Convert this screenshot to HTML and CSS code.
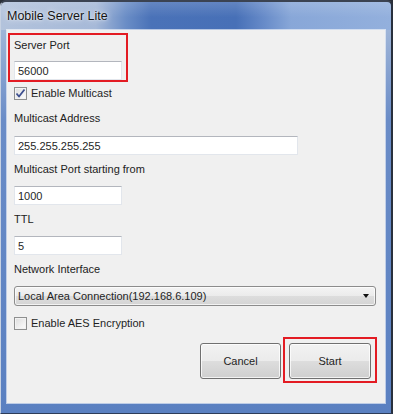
FILE: index.html
```html
<!DOCTYPE html>
<html lang="en">

<head>
    <meta charset="UTF-8">
    <meta name="viewport" content="width=device-width, initial-scale=1.0">
    <title>Mobile Server Lite</title>
    <link rel="stylesheet" href="styles.css">
</head>

<body>
    <div class="window">
        <div class="titlebar">
            <span class="title">Mobile Server Lite</span>
        </div>

        <div class="frame">
            <div class="client">
                <!-- Server port (highlighted) -->
                <div class="highlight port-box">
                    <span class="label">Server Port</span>
                    <input class="field field-short" type="text" value="56000">
                </div>

                <div class="form">
                    <label class="check-row multicast-row">
                        <span class="check">
                            <svg width="11" height="11" viewBox="0 0 11 11">
                                <path d="M1.5 5.5 L4 8.5 L9.5 1.5" fill="none" stroke="#3d4f8f" stroke-width="1.8" stroke-linejoin="round" />
                            </svg>
                        </span>
                        <span>Enable Multicast</span>
                    </label>

                    <span class="label address-label">Multicast Address</span>
                    <input class="field field-long address-field" type="text" value="255.255.255.255">

                    <span class="label gap-label">Multicast Port starting from</span>
                    <input class="field field-short gap-field" type="text" value="1000">

                    <span class="label gap-label">TTL</span>
                    <input class="field field-short gap-field" type="text" value="5">

                    <span class="label gap-label">Network Interface</span>
                    <div class="combo">
                        <span>Local Area Connection(192.168.6.109)</span>
                        <span class="arrow"></span>
                    </div>

                    <label class="check-row aes-row">
                        <span class="check"></span>
                        <span>Enable AES Encryption</span>
                    </label>
                </div>

                <div class="buttons">
                    <button class="btn btn-cancel">Cancel</button>
                    <div class="highlight start-box">
                        <button class="btn">Start</button>
                    </div>
                </div>
            </div>
        </div>
    </div>
</body>

</html>
```

FILE: styles.css
```css
* {
    margin: 0;
    padding: 0;
    box-sizing: border-box;
}

body {
    width: 393px;
    height: 414px;
    overflow: hidden;
    background: #2a2f38;
    font-family: "Liberation Sans", Arial, sans-serif;
    font-size: 11px;
    color: #1f1f1f;
}

.window {
    width: 393px;
    height: 414px;
    display: flex;
    flex-direction: column;
    border-top: 2px solid #3b4352;
    border-right: 2px solid #28303d;
    border-left: 1px solid #c6d1e2;
    border-bottom: 1px solid #2d3c58;
    border-radius: 6px 6px 0 0;
    overflow: hidden;
}

/* Aero title bar */
.titlebar {
    height: 28px;
    display: flex;
    align-items: center;
    padding-left: 6px;
    background:
        linear-gradient(180deg, rgba(255, 255, 255, 0.15) 0%, rgba(255, 255, 255, 0) 55%),
        linear-gradient(90deg, #b3c3dc 0, #a6b9d8 95px, #6a8dc6 125px, #4a72b8 150px, #4770b7 235px, #668ac8 262px, #88a7d8 290px, #93b0dd 100%);
}

.title {
    font-size: 12.5px;
    color: #141414;
    text-shadow: 0 0 6px rgba(255, 255, 255, 0.9), 0 0 2px rgba(255, 255, 255, 0.8);
}

.frame {
    flex: 1;
    display: flex;
    padding: 0 6px 10px 6px;
    background: linear-gradient(180deg, #9fb5d8 0, #6a8cc7 90px, #5a80c1 100%);
}

.client {
    flex: 1;
    background: #f0f0f0;
    box-shadow: 0 0 0 1px rgba(255, 255, 255, 0.6);
    padding: 3px 0 0 1px;
    display: flex;
    flex-direction: column;
    align-items: flex-start;
}

.highlight {
    border: 2px solid #e31b23;
}

.port-box {
    width: 120px;
    padding: 0 4px;
}

.label {
    display: block;
    line-height: 20px;
    color: #222;
}

.port-box .field {
    margin-top: 6px;
}

.field {
    display: block;
    height: 19px;
    padding: 1px 3px 0;
    background: #fff;
    border: 1px solid #e2e6ec;
    border-top-color: #b3b6bd;
    font-family: inherit;
    font-size: 11px;
    color: #1f1f1f;
    outline: none;
}

.field-short {
    width: 108px;
}

.field-long {
    width: 284px;
}

.form {
    padding-left: 6px;
    display: flex;
    flex-direction: column;
    align-items: flex-start;
}

.check-row {
    height: 14px;
    display: flex;
    align-items: center;
    gap: 4px;
}

.multicast-row {
    margin-top: 4px;
}

.check {
    width: 13px;
    height: 13px;
    display: flex;
    align-items: center;
    justify-content: center;
    border: 1px solid #8e8f8f;
    background: linear-gradient(135deg, #dcdcdc 0%, #f4f4f4 70%, #fdfdfd 100%);
    box-shadow: inset 0 0 0 1px #f2f2f2;
}

.address-label {
    margin-top: 8px;
}

.address-field {
    margin-top: 8px;
}

.gap-label {
    margin-top: 4px;
}

.gap-field {
    margin-top: 7px;
}

/* Dropdown list styled like a Win7 button */
.combo {
    margin-top: 7px;
    width: 362px;
    height: 20px;
    display: flex;
    align-items: center;
    justify-content: space-between;
    padding: 0 6px 0 3px;
    border: 1px solid #8c8c8c;
    border-radius: 3px;
    background: linear-gradient(180deg, #f4f4f4 0%, #ebebeb 50%, #dddddd 51%, #d4d4d4 100%);
    box-shadow: inset 0 0 0 1px rgba(255, 255, 255, 0.7);
}

.arrow {
    width: 0;
    height: 0;
    border-left: 3.5px solid transparent;
    border-right: 3.5px solid transparent;
    border-top: 4px solid #111;
}

.aes-row {
    margin-top: 10px;
}

.buttons {
    align-self: stretch;
    margin-top: 7px;
    padding-right: 8px;
    display: flex;
    justify-content: flex-end;
    align-items: flex-start;
    gap: 2px;
}

.start-box {
    padding: 4px 4px 2px;
}

.btn {
    width: 82px;
    height: 36px;
    border: 1px solid #707070;
    border-radius: 3px;
    background: linear-gradient(180deg, #f2f2f2 0%, #ebebeb 50%, #dddddd 51%, #cfcfcf 100%);
    box-shadow: inset 0 0 0 1px rgba(255, 255, 255, 0.75);
    font-family: inherit;
    font-size: 11px;
    color: #1f1f1f;
    cursor: pointer;
}

.btn-cancel {
    width: 81px;
    margin-top: 6px;
}
```
